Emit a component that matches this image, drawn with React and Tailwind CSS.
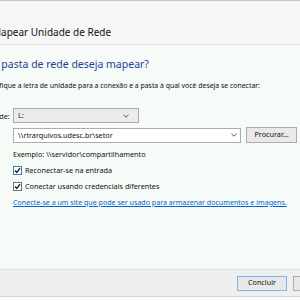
const FONT = { fontFamily: '"Noto Sans", "Open Sans", sans-serif' }

function Chevron() {
  return (
    <svg width="6" height="4" viewBox="0 0 6 4" className="shrink-0">
      <path d="M0.5 0.8 L3 3.2 L5.5 0.8" fill="none" stroke="#555" strokeWidth="1" />
    </svg>
  )
}

function Checkbox({ focused }) {
  return (
    <span
      className={`flex h-[9px] w-[9px] shrink-0 items-center justify-center border bg-white ${
        focused ? 'border-[#3c7fb1]' : 'border-[#707070]'
      }`}
    >
      <svg width="7" height="7" viewBox="0 0 7 7">
        <path d="M1 3.6 L2.8 5.4 L6 1.2" fill="none" stroke="#222" strokeWidth="1.4" />
      </svg>
    </span>
  )
}

export default function App() {
  return (
    <div className="w-[300px] h-[300px] overflow-hidden bg-[#f9f9f9] text-[#111]" style={FONT}>
      <div className="h-px bg-[#c6c6c6]" />

      {/* title bar */}
      <div className="h-[44px] bg-[#f6f6f6] border-b border-[#dcdcdc] pt-[25px]">
        <div className="-ml-[8px] text-[10px] leading-[13px] whitespace-nowrap">Mapear Unidade de Rede</div>
      </div>

      {/* content */}
      <div className="h-[225px] bg-[#f6fbf8] border-b border-[#dedede] -ml-[22px] pt-[12px] text-[7.25px]">
        <h2 className="text-[10.5px] leading-[14px] text-[#1f3f9a] whitespace-nowrap">
          Que pasta de rede deseja mapear?
        </h2>
        <p className="mt-[9px] ml-[1px] text-[6.9px] leading-[12px] whitespace-nowrap">
          Especifique a letra de unidade para a conexão e a pasta à qual você deseja se conectar:
        </p>

        <div className="mt-[16px] flex items-center">
          <span className="w-[35px] pl-[1px] leading-[12px] whitespace-nowrap">Unidade:</span>
          <div className="flex h-[15px] w-[126px] items-center justify-between border border-[#acacac] bg-[#ececec] pl-[4px] pr-[9px]">
            <span>L:</span>
            <Chevron />
          </div>
        </div>

        <div className="mt-[4px] flex items-center">
          <span className="w-[35px]" />
          <div className="flex h-[15px] w-[228px] items-center justify-between border border-[#abadb3] bg-white pl-[4px] pr-[3px]">
            <span className="whitespace-nowrap">\\rtrarquivos.udesc.br\setor</span>
            <Chevron />
          </div>
          <button className="ml-[5px] h-[16px] w-[51px] shrink-0 border border-[#acacac] bg-[#e9e9e9] leading-none">
            Procurar...
          </button>
        </div>

        <div className="ml-[35px] mt-[5px] leading-[12px] whitespace-nowrap">
          Exemplo: \\servidor\compartilhamento
        </div>

        <label className="ml-[35px] mt-[4px] flex h-[12px] items-center gap-[3px] whitespace-nowrap">
          <Checkbox focused />
          Reconectar-se na entrada
        </label>
        <label className="ml-[35px] mt-[4px] flex h-[12px] items-center gap-[3px] whitespace-nowrap">
          <Checkbox />
          Conectar usando credenciais diferentes
        </label>

        <a href="#" className="ml-[35px] mt-[4px] block text-[7.1px] leading-[12px] text-[#0066cc] underline whitespace-nowrap">
          Conecte-se a um site que pode ser usado para armazenar documentos e imagens.
        </a>
      </div>

      {/* footer */}
      <div className="flex h-[27px] items-center justify-end gap-[6px] bg-[#efefef] border-b border-[#d6d6d6] -mr-[43px] text-[7.25px]">
        <button className="h-[15px] w-[50px] border border-[#7eb4ea] bg-[#e8e8e8] leading-none">
          Concluir
        </button>
        <button className="h-[15px] w-[50px] border border-[#acacac] bg-[#e8e8e8] leading-none">
          Cancelar
        </button>
      </div>
    </div>
  )
}
